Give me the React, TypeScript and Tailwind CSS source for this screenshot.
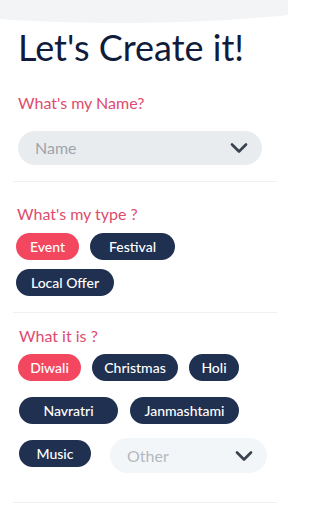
import { ChevronDown } from "lucide-react";

const font = { fontFamily: 'Lato, "Noto Sans", sans-serif' };

function Chip({ label, active, w }: { label: string; active?: boolean; w: string }) {
  return (
    <span
      className={`${w} flex h-[27px] shrink-0 items-center justify-center rounded-full text-[14px] font-medium leading-none text-white ${
        active ? "bg-[#f3475f]" : "bg-[#1f3050]"
      }`}
    >
      {label}
    </span>
  );
}

function Select({
  placeholder,
  className,
  textColor,
}: {
  placeholder: string;
  className: string;
  textColor: string;
}) {
  return (
    <div className={`flex shrink-0 items-center justify-between rounded-full pr-[9px] pl-[17px] ${className}`}>
      <span className={`text-[16px] leading-none ${textColor}`}>{placeholder}</span>
      <ChevronDown className="size-[28px] text-[#3c4350]" strokeWidth={2.3} aria-hidden />
    </div>
  );
}

function Divider({ className }: { className: string }) {
  return <div className={`mr-[11px] ml-[13px] h-px bg-[#eef0f2] ${className}`} />;
}

export default function App() {
  return (
    <div className="relative h-[512px] w-[288px] overflow-hidden bg-white" style={font}>
      {/* top decorative curve */}
      <div className="absolute -top-[58px] -left-[160px] h-[81px] w-[560px] rounded-[50%] bg-[#f3f4f6]" />

      <div className="relative px-[18px] pt-[25px]">
        <h1 className="text-[36px] leading-[44px] font-normal text-[#111c3c]">Let's Create it!</h1>

        <p className="mt-[24px] text-[16px] leading-5 text-[#de4b6e]">What's my Name?</p>
        <Select
          placeholder="Name"
          textColor="text-[#9ea4ad]"
          className="mt-[18px] h-[34px] w-[244px] bg-[#e9ecef]"
        />
      </div>

      <Divider className="mt-[16px]" />

      <div className="px-[16px]">
        <p className="mt-[22px] pl-px text-[16px] leading-5 text-[#de4b6e]">What's my type ?</p>
        <div className="mt-[9px] flex flex-col gap-[9px]">
          <div className="flex gap-[11px]">
            <Chip label="Event" active w="w-[63px]" />
            <Chip label="Festival" w="w-[85px]" />
          </div>
          <div className="flex">
            <Chip label="Local Offer" w="w-[98px]" />
          </div>
        </div>
      </div>

      <Divider className="mt-[16px]" />

      <div className="px-[18px]">
        <p className="mt-[13px] pl-px text-[16px] leading-5 text-[#de4b6e]">What it is ?</p>
        <div className="mt-[8px] flex flex-col">
          <div className="flex gap-[11px]">
            <Chip label="Diwali" active w="w-[63px]" />
            <Chip label="Christmas" w="w-[86px]" />
            <Chip label="Holi" w="w-[50px]" />
          </div>
          <div className="mt-[16px] flex gap-[12px] pl-px">
            <Chip label="Navratri" w="w-[99px]" />
            <Chip label="Janmashtami" w="w-[109px]" />
          </div>
          <div className="mt-[14px] flex items-start gap-[19px] pl-px">
            <div className="mt-[2px]">
              <Chip label="Music" w="w-[72px]" />
            </div>
            <Select
              placeholder="Other"
              textColor="text-[#b3b8bf]"
              className="h-[35px] w-[157px] bg-[#f3f6f8]"
            />
          </div>
        </div>
      </div>

      <Divider className="mt-[29px]" />
    </div>
  );
}
